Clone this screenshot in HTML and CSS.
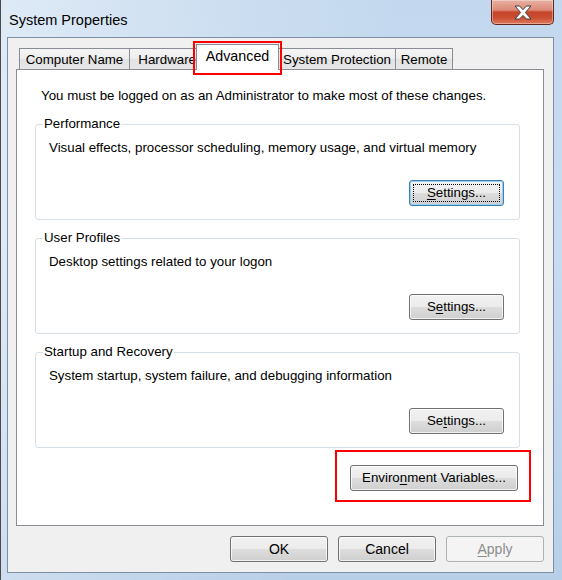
FILE: index.html
```html
<!DOCTYPE html>
<html>
<head>
<meta charset="utf-8">
<title>System Properties</title>
<link rel="stylesheet" href="styles.css">
</head>
<body>
<div class="window">
  <div class="titlebar">
    <div class="title">System Properties</div>
    <div class="close">
      <svg width="20" height="15" viewBox="0 0 20 15"><polygon points="2,1 6.5,1 10,4.6 13.5,1 18,1 12.4,7.5 18,14 13.5,14 10,10.4 6.5,14 2,14 7.6,7.5" fill="#fff" stroke="#3c3c3c" stroke-width="1" stroke-linejoin="round"/></svg>
    </div>
  </div>
  <div class="client">
    <div class="tabs">
      <div class="tab t-cn">Computer Name</div>
      <div class="tab t-hw">Hardware</div>
      <div class="tab t-adv selected">Advanced</div>
      <div class="tab t-sp">System Protection</div>
      <div class="tab t-rm">Remote</div>
    </div>
    <div class="panel">
      <p class="note">You must be logged on as an Administrator to make most of these changes.</p>
      <fieldset class="group first">
        <legend>Performance</legend>
        <p class="desc">Visual effects, processor scheduling, memory usage, and virtual memory</p>
        <div class="row"><button class="btn settings focused"><u>S</u>ettings...</button></div>
      </fieldset>
      <fieldset class="group">
        <legend>User Profiles</legend>
        <p class="desc">Desktop settings related to your logon</p>
        <div class="row"><button class="btn settings">S<u>e</u>ttings...</button></div>
      </fieldset>
      <fieldset class="group">
        <legend>Startup and Recovery</legend>
        <p class="desc">System startup, system failure, and debugging information</p>
        <div class="row"><button class="btn settings">Se<u>t</u>tings...</button></div>
      </fieldset>
      <div class="row env-row"><button class="btn env">Enviro<u>n</u>ment Variables...</button></div>
    </div>
    <div class="actions">
      <button class="btn action">OK</button>
      <button class="btn action">Cancel</button>
      <button class="btn action disabled"><u>A</u>pply</button>
    </div>
  </div>
</div>
</body>
</html>
```

FILE: styles.css
```css
* { box-sizing: border-box; }
html, body { margin: 0; padding: 0; }
body {
  width: 562px;
  height: 580px;
  overflow: hidden;
  font-family: "Liberation Sans", Arial, sans-serif;
  font-size: 13.3px;
  color: #000;
}
.window {
  width: 562px;
  height: 580px;
  padding: 0 8px 7px 6px;
  border-left: 1px solid #4a4a4a;
  background:
    linear-gradient(100deg, rgba(255,255,255,0.45) 0%, rgba(255,255,255,0.15) 35%, rgba(255,255,255,0) 60%),
    linear-gradient(180deg, #c3d8ee 0%, #c9dcf0 40%, #b8cfe8 100%);
  display: flex;
  flex-direction: column;
}
.titlebar {
  height: 37px;
  display: flex;
  justify-content: space-between;
  align-items: flex-start;
}
.title {
  margin: 12px 0 0 2px;
  font-size: 14.5px;
  line-height: 16px;
  color: #000;
}
.close {
  width: 63px;
  height: 25px;
  border: 1px solid #5e2a20;
  border-top: none;
  border-radius: 0 0 5px 5px;
  background: linear-gradient(180deg, #e8b0a2 0%, #dc8a76 42%, #c6462c 50%, #c94b30 72%, #df7a5a 100%);
  box-shadow: inset 0 0 0 1px rgba(255,255,255,0.35);
  display: flex;
  align-items: center;
  justify-content: center;
}
.close svg { display: block; }
.client {
  width: 547px;
  height: 536px;
  border: 1px solid #7d8fa5;
  background: #f0f0f0;
  padding: 6px 9px 0 8px;
  display: flex;
  flex-direction: column;
}
.tabs {
  height: 26px;
  display: flex;
  align-items: flex-end;
  padding-left: 3px;
  position: relative;
  z-index: 2;
}
.tab {
  height: 21px;
  margin-bottom: 1px;
  border: 1px solid #898c95;
  border-bottom: none;
  background: linear-gradient(180deg, #f5f5f5 0%, #ececec 50%, #e2e2e2 50%, #e6e6e6 100%);
  display: flex;
  align-items: center;
  justify-content: center;
  line-height: 16px;
  white-space: nowrap;
  padding-top: 1px;
}
.tab + .tab { margin-left: -1px; }
.t-cn { width: 111px; }
.t-hw { width: 68px; justify-content: flex-end; padding-right: 0; }
.t-adv { width: 83px; }
.t-sp { width: 118px; }
.t-rm { width: 58px; }
.tab.selected {
  height: 26px;
  margin-bottom: 0;
  background: #fff;
  position: relative;
  z-index: 3;
  padding-top: 0;
  padding-bottom: 4px;
  font-size: 14.3px;
}
.tab.selected::after {
  content: "";
  position: absolute;
  left: -4px;
  right: -4px;
  top: -4px;
  bottom: -5px;
  border: 2px solid #ff0000;
}
.panel {
  margin-top: -1px;
  height: 457px;
  flex: none;
  border: 1px solid #898c95;
  background: #fff;
  padding: 18px 23px 0 18px;
  display: flex;
  flex-direction: column;
  position: relative;
  z-index: 1;
}
.note {
  margin: 0 0 12px 6px;
  line-height: 16px;
}
.group {
  margin: 0;
  padding: 0 15px 13px 0;
  min-width: 0;
  border: 1px solid #d5dfe5;
  border-radius: 3px;
}
.group + .group { margin-top: 10px; }
.group legend {
  margin-left: 7px;
  padding: 0 1px;
  line-height: 16px;
}
.desc {
  margin: 8px 0 24px 13px;
  line-height: 16px;
}
.row {
  display: flex;
  justify-content: flex-end;
}
.btn {
  font-family: "Liberation Sans", Arial, sans-serif;
  font-size: 13.3px;
  color: #000;
  height: 26px;
  padding: 0;
  border: 1px solid #707070;
  border-radius: 3px;
  background: linear-gradient(180deg, #f2f2f2 0%, #ebebeb 48%, #dddddd 52%, #cfcfcf 100%);
  box-shadow: inset 0 0 0 1px rgba(255,255,255,0.75);
  position: relative;
  line-height: 16px;
}
.settings { width: 95px; }
.focused {
  border-color: #3c7fb1;
  box-shadow: inset 0 0 0 1px #98d1ef;
}
.focused::before {
  content: "";
  position: absolute;
  left: 3px;
  right: 3px;
  top: 3px;
  bottom: 3px;
  border: 1px dotted #000;
}
.env-row { margin-top: 17px; padding-right: 2px; }
.env { width: 168px; }
.env::after {
  content: "";
  position: absolute;
  left: -16px;
  right: -14px;
  top: -16px;
  bottom: -12px;
  border: 2px solid #ff0000;
}
.actions {
  margin-top: 10px;
  display: flex;
  justify-content: flex-end;
  gap: 10px;
}
.action { width: 98px; font-size: 14px; }
.disabled {
  color: #8d8d8d;
  border-color: #adb2b5;
  background: #f4f4f4;
  box-shadow: none;
}
u { text-decoration-thickness: 1px; text-underline-offset: 2px; }
```
